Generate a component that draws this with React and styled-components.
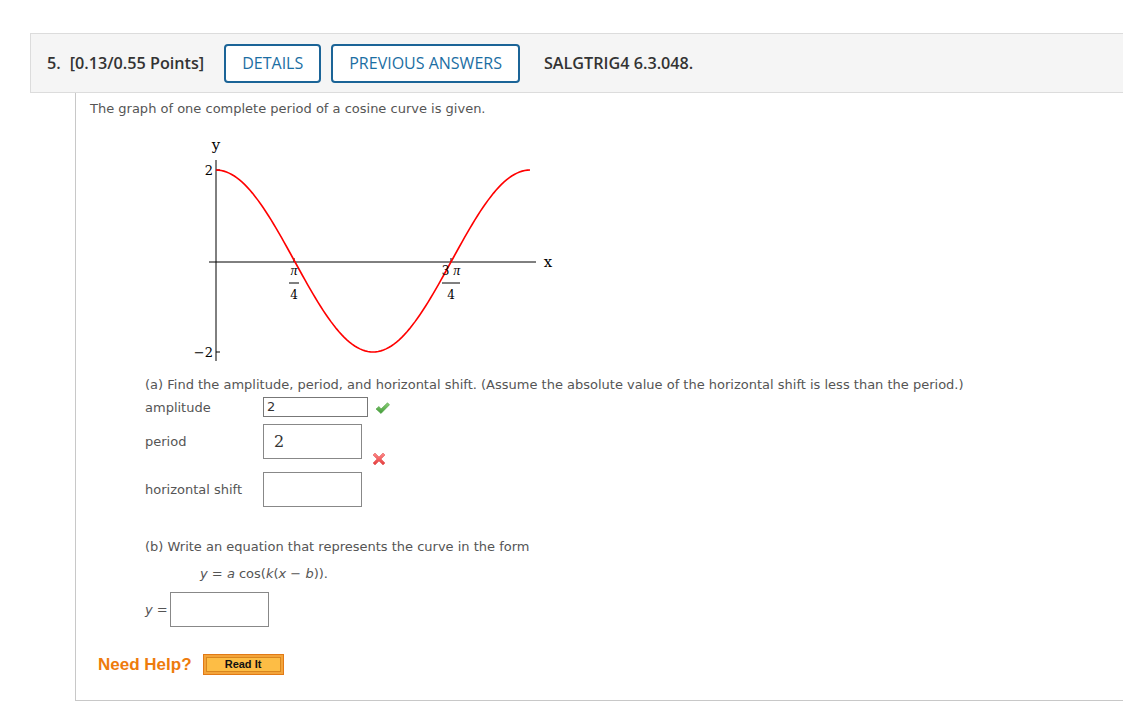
import React from 'react'
import styled, { createGlobalStyle } from 'styled-components'

const GlobalStyle = createGlobalStyle`
  body {
    margin: 0;
    background: #fff;
    font-family: "DejaVu Sans", Verdana, sans-serif;
  }
`

const curvePath = () => {
  const pts = []
  for (let i = 0; i <= 120; i++) {
    const x = 31 + (314 * i) / 120
    const y = 127 - 91 * Math.cos((2 * Math.PI * i) / 120)
    pts.push(`${i === 0 ? 'M' : 'L'}${x.toFixed(2)},${y.toFixed(2)}`)
  }
  return pts.join(' ')
}

const Graph = () => (
  <GraphSvg width="380" height="230" viewBox="0 0 380 230">
    <g stroke="#000" strokeWidth="1" fill="none">
      <line x1="31" y1="26" x2="31" y2="227" />
      <line x1="24" y1="128" x2="351" y2="128" />
      <line x1="31" y1="36" x2="35" y2="36" />
      <line x1="31" y1="218" x2="35" y2="218" />
      <line x1="109" y1="124" x2="109" y2="128" />
      <line x1="266" y1="124" x2="266" y2="128" />
      <line x1="104" y1="149" x2="114" y2="149" />
      <line x1="257" y1="149" x2="275" y2="149" />
    </g>
    <path d={curvePath()} stroke="#ff0000" strokeWidth="1.6" fill="none" />
    <g fontFamily="'DejaVu Serif', 'Liberation Serif', serif" fontSize="13" fill="#000">
      <text x="31" y="16" textAnchor="middle" fontSize="15">y</text>
      <text x="363" y="133" textAnchor="middle" fontSize="15">x</text>
      <text x="28" y="41" textAnchor="end">2</text>
      <text x="28" y="223" textAnchor="end">−2</text>
      <text x="109" y="141" textAnchor="middle" fontSize="14" fontStyle="italic" fontFamily="'Liberation Serif', serif">π</text>
      <text x="109" y="165" textAnchor="middle" fontSize="12">4</text>
      <text x="266" y="141" textAnchor="middle" fontSize="12">
        3 <tspan fontStyle="italic" fontFamily="'Liberation Serif', serif" fontSize="14">π</tspan>
      </text>
      <text x="266" y="165" textAnchor="middle" fontSize="12">4</text>
    </g>
  </GraphSvg>
)

const Check = () => (
  <Mark width="15" height="13" viewBox="0 0 15 13">
    <defs>
      <linearGradient id="gck" x1="0" y1="0" x2="0" y2="1">
        <stop offset="0" stopColor="#8fd17a" />
        <stop offset="1" stopColor="#3d9a35" />
      </linearGradient>
    </defs>
    <path d="M1 7 L4 4.5 L6 7 L12.5 0.8 L14.5 2.8 L6 11.5 Z" fill="url(#gck)" stroke="#4a9a3e" strokeWidth="0.6" />
  </Mark>
)

const Cross = () => (
  <Mark width="14" height="14" viewBox="0 0 14 14">
    <defs>
      <linearGradient id="gx" x1="0" y1="0" x2="0" y2="1">
        <stop offset="0" stopColor="#ff8a8a" />
        <stop offset="1" stopColor="#e33b3b" />
      </linearGradient>
    </defs>
    <path
      d="M1 3 L3 1 L7 5 L11 1 L13 3 L9 7 L13 11 L11 13 L7 9 L3 13 L1 11 L5 7 Z"
      fill="url(#gx)"
      stroke="#e04848"
      strokeWidth="0.5"
    />
  </Mark>
)

export default function App() {
  return (
    <>
      <GlobalStyle />
      <Page>
        <Header>
          <Num>5.</Num>
          <Points>[0.13/0.55 Points]</Points>
          <OutlineButton>DETAILS</OutlineButton>
          <OutlineButton>PREVIOUS ANSWERS</OutlineButton>
          <Code>SALGTRIG4 6.3.048.</Code>
        </Header>
        <Body>
          <Intro>The graph of one complete period of a cosine curve is given.</Intro>
          <Graph />
          <Part $top={13}>
            <Prompt>
              (a) Find the amplitude, period, and horizontal shift. (Assume the absolute value of the horizontal shift is less than the period.)
            </Prompt>
            <FieldRow>
              <Label>amplitude</Label>
              <SmallInput>2</SmallInput>
              <Check />
            </FieldRow>
            <FieldRow $top={7}>
              <Label>period</Label>
              <MathInput>2</MathInput>
              <MarkLow>
                <Cross />
              </MarkLow>
            </FieldRow>
            <FieldRow $top={13}>
              <Label>horizontal shift</Label>
              <MathInput />
            </FieldRow>
          </Part>
          <Part $top={32}>
            <Prompt>(b) Write an equation that represents the curve in the form</Prompt>
            <Equation>
              <i>y</i> = <i>a</i> cos(<i>k</i>(<i>x</i> − <i>b</i>)).
            </Equation>
            <AnswerRow>
              <AnswerLabel>
                <i>y</i> =
              </AnswerLabel>
              <MathInput />
            </AnswerRow>
          </Part>
          <HelpRow>
            <HelpText>Need Help?</HelpText>
            <ReadIt>
              <span>Read It</span>
            </ReadIt>
          </HelpRow>
        </Body>
      </Page>
    </>
  )
}

const Page = styled.div`
  padding: 33px 0 0 30px;
`

const Header = styled.div`
  display: flex;
  align-items: center;
  height: 58px;
  background: #f5f5f5;
  border: 1px solid #dcdcdc;
  border-right: none;
  padding-left: 16px;
  font-family: "Open Sans", "Noto Sans", sans-serif;
  font-weight: 600;
  font-size: 16.2px;
  color: #333;
`

const Num = styled.span`
  margin-right: 9px;
`

const Points = styled.span`
  margin-right: 20px;
`

const OutlineButton = styled.div`
  display: flex;
  align-items: center;
  height: 35px;
  padding: 0 16px;
  margin-right: 10px;
  border: 2px solid #1b6497;
  border-radius: 4px;
  background: #fff;
  color: #1b6ea3;
  font-weight: 400;
  font-size: 16px;
`

const Code = styled.span`
  margin-left: 14px;
`

const Body = styled.div`
  margin-left: 45px;
  border-left: 1px solid #c8c8c8;
  border-bottom: 1px solid #c8c8c8;
  padding: 8px 0 26px 14px;
  height: 608px;
  box-sizing: border-box;
  color: #555;
  font-size: 13px;
`

const Intro = styled.div`
  line-height: 16px;
`

const GraphSvg = styled.svg`
  display: block;
  margin: 17px 0 0 95px;
`

const Part = styled.div`
  margin-left: 55px;
  margin-top: ${p => p.$top || 6}px;
`

const Prompt = styled.div`
  line-height: 16px;
`

const FieldRow = styled.div`
  display: flex;
  align-items: flex-start;
  margin-top: ${p => p.$top || 4}px;
`

const Label = styled.div`
  width: 118px;
  align-self: center;
`

const SmallInput = styled.div`
  width: 100px;
  height: 18px;
  border: 1px solid #777;
  padding-left: 3px;
  font-size: 13px;
  line-height: 18px;
  color: #333;
`

const MathInput = styled.div`
  width: 87px;
  height: 33px;
  border: 1px solid #888;
  padding-left: 10px;
  box-sizing: content-box;
  font-family: "DejaVu Serif", "Liberation Serif", serif;
  font-size: 16px;
  line-height: 33px;
  color: #333;
`

const Mark = styled.svg`
  display: block;
  margin: 5px 0 0 7px;
`

const MarkLow = styled.div`
  align-self: flex-end;
  margin-bottom: -7px;
  margin-left: 3px;
`

const Equation = styled.div`
  margin: 11px 0 0 55px;
  line-height: 16px;
`

const AnswerRow = styled.div`
  display: flex;
  align-items: center;
  margin-top: 10px;
`

const AnswerLabel = styled.span`
  width: 25px;
`

const HelpRow = styled.div`
  display: flex;
  align-items: center;
  margin-top: 27px;
  margin-left: 8px;
`

const HelpText = styled.span`
  font-family: "Liberation Sans", Arial, sans-serif;
  font-weight: 700;
  font-size: 17px;
  color: #ee7b0c;
  margin-right: 11px;
`

const ReadIt = styled.div`
  border: 1px solid #e27a16;
  background: #f3a43a;
  padding: 2px;
  span {
    display: block;
    width: 73px;
    height: 13px;
    border: 1px solid #d9861e;
    background: #fdbd45;
    text-align: center;
    font-family: "Liberation Sans", Arial, sans-serif;
    font-weight: 700;
    font-size: 11px;
    line-height: 13px;
    color: #111;
  }
`
